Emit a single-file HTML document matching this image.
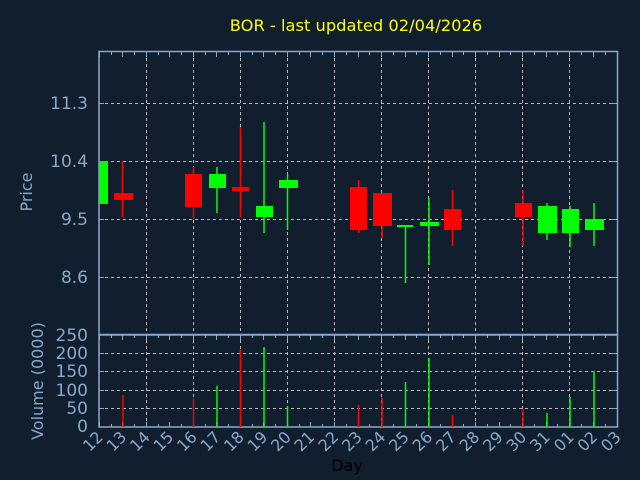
<!DOCTYPE html>
<html><head><meta charset="utf-8"><style>
html,body{margin:0;padding:0;background:#101e2e;}
svg{display:block;font-family:"DejaVu Sans","Liberation Sans",sans-serif;}
</style></head><body>
<svg width="640" height="480" viewBox="0 0 640 480" xmlns="http://www.w3.org/2000/svg">
<rect width="640" height="480" fill="#101e2e"/>
<text x="356" y="31" fill="#ffff00" font-size="16.3" text-anchor="middle">BOR - last updated 02/04/2026</text>
<g stroke="#b8b8b8" stroke-width="1" stroke-dasharray="3,3" fill="none">
<path d="M99 103.5H617M99 161.5H617M99 219.5H617M99 277.5H617"/>
<path d="M99 353.5H617M99 371.5H617M99 390.5H617M99 408.5H617"/>
<path d="M146.5 52V427M193.5 52V427M240.5 52V427M287.5 52V427M334.5 52V427M381.5 52V427M428.5 52V427M475.5 52V427M522.5 52V427M569.5 52V427"/>
</g>
<g stroke="#8aa8cc" stroke-width="1.5" fill="none">
<rect x="99" y="51.5" width="518.5" height="283"/>
<rect x="99" y="335" width="518.5" height="92"/>
</g>
<g stroke="#8aa8cc" stroke-width="1" fill="none">
<path d="M99.5 52v5M122.5 52v5M146.5 52v5M169.5 52v5M193.5 52v5M216.5 52v5M240.5 52v5M263.5 52v5M287.5 52v5M310.5 52v5M334.5 52v5M358.5 52v5M381.5 52v5M405.5 52v5M428.5 52v5M452.5 52v5M475.5 52v5M499.5 52v5M522.5 52v5M546.5 52v5M569.5 52v5M593.5 52v5
M111.5 52v3M134.5 52v3M158.5 52v3M181.5 52v3M205.5 52v3M228.5 52v3M252.5 52v3M275.5 52v3M299.5 52v3M322.5 52v3M346.5 52v3M369.5 52v3M393.5 52v3M416.5 52v3M440.5 52v3M463.5 52v3M487.5 52v3M510.5 52v3M534.5 52v3M557.5 52v3M581.5 52v3M605.5 52v3"/>
<path d="M99.5 335v5M122.5 335v5M146.5 335v5M169.5 335v5M193.5 335v5M216.5 335v5M240.5 335v5M263.5 335v5M287.5 335v5M310.5 335v5M334.5 335v5M358.5 335v5M381.5 335v5M405.5 335v5M428.5 335v5M452.5 335v5M475.5 335v5M499.5 335v5M522.5 335v5M546.5 335v5M569.5 335v5M593.5 335v5
M111.5 335v3M134.5 335v3M158.5 335v3M181.5 335v3M205.5 335v3M228.5 335v3M252.5 335v3M275.5 335v3M299.5 335v3M322.5 335v3M346.5 335v3M369.5 335v3M393.5 335v3M416.5 335v3M440.5 335v3M463.5 335v3M487.5 335v3M510.5 335v3M534.5 335v3M557.5 335v3M581.5 335v3M605.5 335v3"/>
<path d="M99.5 427v-5M122.5 427v-5M146.5 427v-5M169.5 427v-5M193.5 427v-5M216.5 427v-5M240.5 427v-5M263.5 427v-5M287.5 427v-5M310.5 427v-5M334.5 427v-5M358.5 427v-5M381.5 427v-5M405.5 427v-5M428.5 427v-5M452.5 427v-5M475.5 427v-5M499.5 427v-5M522.5 427v-5M546.5 427v-5M569.5 427v-5M593.5 427v-5
M111.5 427v-3M134.5 427v-3M158.5 427v-3M181.5 427v-3M205.5 427v-3M228.5 427v-3M252.5 427v-3M275.5 427v-3M299.5 427v-3M322.5 427v-3M346.5 427v-3M369.5 427v-3M393.5 427v-3M416.5 427v-3M440.5 427v-3M463.5 427v-3M487.5 427v-3M510.5 427v-3M534.5 427v-3M557.5 427v-3M581.5 427v-3M605.5 427v-3"/>
<path d="M99 103.5h5M99 161.5h5M99 219.5h5M99 277.5h5M617 103.5h-5M617 161.5h-5M617 219.5h-5M617 277.5h-5
M99 353.5h5M99 371.5h5M99 390.5h5M99 408.5h5M617 353.5h-5M617 371.5h-5M617 390.5h-5M617 408.5h-5"/>
</g>
<g stroke-width="1.5">
<path stroke="#ff0000" d="M122.5 161V217M193.5 167V219M240.5 127V217M358.5 180V233M382 193V238M452.5 190V246M523 190V246"/>
<path stroke="#00ff00" d="M217 167V213M264 122V233M287.5 174V230M405.5 225V283M429 198V265M547 203V240M570 206V247M594 203V246"/>
</g>
<g fill="#ff0000">
<rect x="114" y="193" width="19" height="7"/>
<rect x="185" y="174" width="17" height="33"/>
<rect x="232" y="187" width="17" height="4"/>
<rect x="350" y="187" width="17" height="43"/>
<rect x="373" y="193" width="19" height="33"/>
<rect x="444" y="209" width="17" height="21"/>
<rect x="515" y="203" width="17" height="14"/>
</g>
<g fill="#00ff00">
<rect x="99" y="161" width="9" height="43"/>
<rect x="209" y="174" width="17" height="14"/>
<rect x="256" y="206" width="17" height="11"/>
<rect x="279" y="180" width="19" height="8"/>
<rect x="397" y="225" width="16" height="2"/>
<rect x="420" y="222" width="19" height="4"/>
<rect x="538" y="206" width="19" height="27"/>
<rect x="562" y="209" width="17" height="24"/>
<rect x="585" y="219" width="19" height="11"/>
</g>
<g stroke-width="1.5">
<path stroke="#ff0000" d="M123 395V427M193.5 399V427M240.5 350V427M358.5 405V427M382 398V427M452.5 415V427M523 409V427"/>
<path stroke="#00ff00" d="M217 386V427M264 347V427M287.5 406V427M405.5 382V427M429 358V427M547 413V427M570 397V427M594 371V427"/>
</g>
<g fill="#8aa8cc" font-size="17" text-anchor="end">
<text x="88" y="109">11.3</text>
<text x="88" y="167">10.4</text>
<text x="88" y="225">9.5</text>
<text x="88" y="283">8.6</text>
<text x="88" y="341">250</text>
<text x="88" y="359">200</text>
<text x="88" y="377">150</text>
<text x="88" y="396">100</text>
<text x="88" y="414">50</text>
<text x="88" y="432">0</text>
</g>
<text transform="translate(32,192) rotate(-90)" fill="#8aa8cc" font-size="16" text-anchor="middle">Price</text>
<text transform="translate(43,381) rotate(-90)" fill="#8aa8cc" font-size="16" text-anchor="middle">Volume (0000)</text>
<g fill="#8aa8cc" font-size="16" text-anchor="end">
<text transform="translate(104,438) rotate(-45)">12</text>
<text transform="translate(127.5,438) rotate(-45)">13</text>
<text transform="translate(151,438) rotate(-45)">14</text>
<text transform="translate(174.5,438) rotate(-45)">15</text>
<text transform="translate(198,438) rotate(-45)">16</text>
<text transform="translate(221.5,438) rotate(-45)">17</text>
<text transform="translate(245,438) rotate(-45)">18</text>
<text transform="translate(268.5,438) rotate(-45)">19</text>
<text transform="translate(292,438) rotate(-45)">20</text>
<text transform="translate(315.5,438) rotate(-45)">21</text>
<text transform="translate(339.5,438) rotate(-45)">22</text>
<text transform="translate(363,438) rotate(-45)">23</text>
<text transform="translate(386.5,438) rotate(-45)">24</text>
<text transform="translate(410,438) rotate(-45)">25</text>
<text transform="translate(433.5,438) rotate(-45)">26</text>
<text transform="translate(457,438) rotate(-45)">27</text>
<text transform="translate(480.5,438) rotate(-45)">28</text>
<text transform="translate(504,438) rotate(-45)">29</text>
<text transform="translate(527.5,438) rotate(-45)">30</text>
<text transform="translate(551,438) rotate(-45)">31</text>
<text transform="translate(575,438) rotate(-45)">01</text>
<text transform="translate(598.5,438) rotate(-45)">02</text>
<text transform="translate(622,438) rotate(-45)">03</text>
</g>
<text x="347" y="471" fill="#000000" font-size="16" text-anchor="middle">Day</text>
</svg>
</body></html>
